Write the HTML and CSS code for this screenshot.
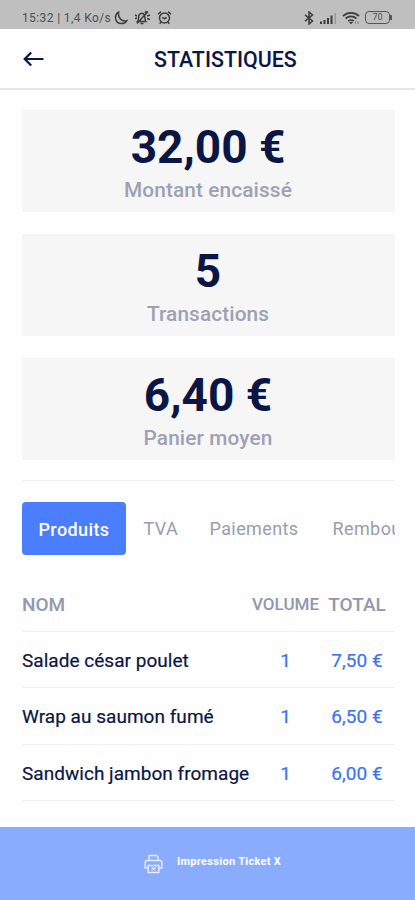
FILE: index.html
```html
<!DOCTYPE html>
<html lang="fr">
<head>
<meta charset="utf-8">
<meta name="viewport" content="width=device-width, initial-scale=1">
<title>Statistiques</title>
<link rel="stylesheet" href="styles.css">
</head>
<body>
<div class="app">
  <div class="status">
    <span class="status-text">15:32 | 1,4 Ko/s</span>
    <svg class="i-moon" width="14" height="14" viewBox="0 0 14 14"><path d="M4.600 1.200C-.2 4 .6 12.600 7.400 12.600c2.700 0 4.500-1.200 5.400-3C8 11 3.500 7 4.600 1.200z"/></svg>
    <svg class="i-mute" width="17" height="15" viewBox="0 0 17 15"><path d="M3.500 11.500h8.300c-1.300-1.200-.2-5-1.700-7C8.600 2.700 5.600 3 4.900 5.500c-.5 2.200.1 4.500-1.400 6zM6.500 13.500h3M14 1.500 3 13.500M1 5l2 1M1 8.500l2-.5M13 6l3-1M13 8.500l3 1M11 3l1.500-2"/></svg>
    <svg class="i-alarm" width="15" height="15" viewBox="0 0 15 15"><circle cx="7.500" cy="8" r="5"/><path d="M1 4.200 4 1.600M14 4.200 11 1.600M4 12l-1.300 1.700M11 12l1.300 1.700M5.300 7.500l2.200 1.200 2.200-1.200"/></svg>
    <span class="grow"></span>
    <svg class="i-bt" width="10" height="14" viewBox="0 0 10 14"><path d="M1 3.800 8.500 10 5 13V1l3.500 3L1 10.200"/></svg>
    <svg class="i-signal" width="18" height="12" viewBox="0 0 18 12"><path d="M1 9.500h2V12H1zM4.500 8h2v4h-2zM8 6h2v6H8zM11.500 3.500h2V12h-2z"/><path class="dim" d="M15.500 1h1.500v11h-1.500z"/></svg>
    <svg class="i-wifi" width="19" height="14" viewBox="0 0 19 14"><path d="M1 5c4.500-4.300 11.500-4.300 16 0M3.600 7.600c3-2.900 7.800-2.900 10.800 0M6.300 10.100c1.500-1.400 3.900-1.400 5.400 0"/><path class="dot" d="m7 11.300 2 2 2-2c-1-.9-3-.9-4 0z"/><path class="thin" d="M13.500 13v-3M16 10v3"/></svg>
    <span class="battery">70</span>
  </div>
  <header class="bar">
    <svg class="back" width="22" height="18" viewBox="0 0 22 18"><path d="M21.500 9H3M9.200 2.500 2.700 9l6.500 6.500"/></svg>
    <h1>STATISTIQUES</h1>
  </header>
  <main>
    <section class="cards">
      <div class="card"><strong>32,00 €</strong><span>Montant encaissé</span></div>
      <div class="card"><strong>5</strong><span>Transactions</span></div>
      <div class="card"><strong>6,40 €</strong><span>Panier moyen</span></div>
    </section>
    <nav class="tabs">
      <a class="active">Produits</a><a class="tva">TVA</a><a class="pay">Paiements</a><a class="refund">Remboursements</a>
    </nav>
    <div class="table">
      <div class="row head"><span>NOM</span><span class="vol">VOLUME</span><span class="total">TOTAL</span></div>
      <div class="row"><span>Salade césar poulet</span><span class="vol">1</span><span class="total">7,50 €</span></div>
      <div class="row"><span>Wrap au saumon fumé</span><span class="vol">1</span><span class="total">6,50 €</span></div>
      <div class="row"><span>Sandwich jambon fromage</span><span class="vol">1</span><span class="total">6,00 €</span></div>
    </div>
  </main>
  <footer class="print">
    <svg width="19" height="20" viewBox="0 0 19 20"><path d="M5 6.500V1.500h7.500L14 3v3.500M4 14H1.200V8.500c0-1.200.7-2 2-2h12.600c1.300 0 2 .8 2 2V14H15M4.200 11.500h10.600v7H4.200zM7.500 13.500l4 3M7.500 16.500l4-3"/></svg>
    <span>Impression Ticket X</span>
  </footer>
</div>
</body>
</html>
```
FILE: styles.css
```css
* { box-sizing: border-box; }
body { margin: 0; background: #fefefe; font-family: Roboto, "Liberation Sans", sans-serif; color: #0b1645; }
.app { width: 415px; height: 900px; display: flex; flex-direction: column; overflow: hidden; }
svg { fill: none; flex: none; }

.status { height: 29px; flex: none; background: #bfbfbf; color: #505050; display: flex; align-items: center; padding: 6px 24px 0 22px; }
.status-text { font-size: 12px; letter-spacing: .38px; width: 92px; white-space: nowrap; }
.status svg { stroke: #3c3c3c; stroke-width: 1.500; }
.i-mute { margin-left: 6px; }
.i-alarm { margin-left: 6px; }
.grow { flex: 1; }
.i-bt { margin-right: 5px; margin-left: -3px; }
.status .i-signal { fill: #3c3c3c; stroke: none; margin-right: 5px; }
.status .i-signal .dim { fill: #999; }
.i-wifi { margin-right: 4px; }
.status .i-wifi { stroke-width: 1.800; }
.status .i-wifi .dot { fill: #3c3c3c; stroke: none; }
.status .i-wifi .thin { stroke: #888; stroke-width: 1; }
.battery { width: 25px; height: 13px; margin: 0 1px 0 0; border: 1.500px solid #555; border-radius: 4px; font-size: 9px; line-height: 11px; text-align: center; position: relative; }
.battery::after { content: ""; position: absolute; right: -3px; top: 3px; width: 2px; height: 5px; background: #555; }

.bar { height: 61px; flex: none; border-bottom: 2px solid #e6e6e6; display: flex; align-items: center; padding: 1px 22px 0; }
.back { stroke: #0b1645; stroke-width: 2.200; }
h1 { margin: 2px 0 0 110px; font-size: 21.400px; font-weight: 500; line-height: 26px; white-space: nowrap; }

main { flex: 1; padding: 20px 20px 0 22px; }
.cards { display: flex; flex-direction: column; gap: 22px; padding-bottom: 20px; border-bottom: 1px solid #f1f1f1; }
.card { height: 102px; background: #f6f6f6; display: flex; flex-direction: column; align-items: center; padding: 10px 1px 0 0; }
.card strong { font-size: 46px; line-height: 54px; font-weight: 700; }
.card span { font-size: 20.800px; font-weight: 500; line-height: 32px; color: #9da1b3; letter-spacing: .12px; }

.tabs { margin-top: 21px; height: 53px; display: flex; align-items: center; overflow: hidden; white-space: nowrap; font-size: 18px; color: #989dac; letter-spacing: .4px; }
.tabs a { line-height: 55px; }
.tabs .active { width: 104px; height: 53px; flex: none; border-radius: 4px; background: #4b7dff; color: #fff; font-weight: 500; text-align: center; }
.tva { margin-left: 17.500px; width: 66px; flex: none; }
.pay { width: 123px; flex: none; }

.table { margin-top: 21px; }
.row { height: 56.200px; padding-top: 2px; display: grid; grid-template-columns: 1fr 67px 76px; align-items: center; border-bottom: 1px solid #f1f1f1; font-size: 19px; letter-spacing: .03px; white-space: nowrap; -webkit-text-stroke: .2px; }
.row .vol, .row .total { text-align: center; color: #3a74f2; }
.row.head { font-weight: 500; letter-spacing: 0; -webkit-text-stroke: 0; }
.row.head span { color: #9297ab; }
.row.head .vol { font-size: 17px; padding-bottom: 2px; }

.print { height: 73px; flex: none; background: #8aacff; color: #fff; display: flex; align-items: center; padding-left: 144px; }
.print svg { stroke: #e4ecff; stroke-width: 1.500; }
.print span { margin: 0 0 4px 14px; font-size: 11px; letter-spacing: .3px; font-weight: 700; line-height: 14px; white-space: nowrap; }
```
